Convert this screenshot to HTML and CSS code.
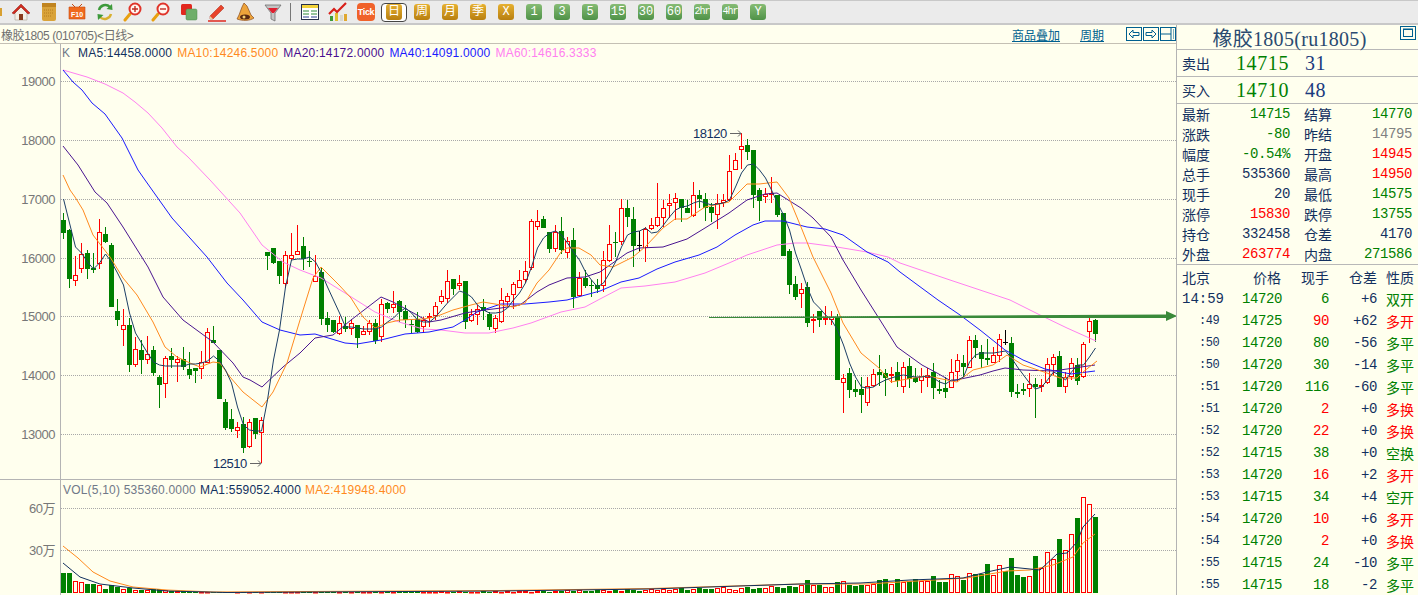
FILE: index.html
```html
<!DOCTYPE html>
<html lang="zh">
<head>
<meta charset="utf-8">
<title>橡胶1805</title>
<link rel="stylesheet" href="styles.css">
</head>
<body>
<div class="app">
  <div class="toolbar">
    <span class="stub"></span>
    <span class="slot"><svg class="ico" viewBox="0 0 20 20"><path d="M8 16V10h4v6z" fill="#7a2a10"/><path d="M4 10v8h12v-8L10 5z" fill="#f4efe6" stroke="#a8a090" stroke-width=".6"/><path d="M8 18v-6h4v6z" fill="#8a3a1a"/><path d="M1 11L10 2l9 9-2 1-7-7-7 7z" fill="#d02a1e" stroke="#8e1a10" stroke-width=".5"/></svg></span>
    <span class="slot"><svg class="ico" viewBox="0 0 20 20"><rect x="3" y="1" width="14" height="18" rx="2" fill="#d9a33a"/><rect x="3" y="1" width="14" height="4" fill="#c08420"/><path d="M5 8h10M5 11h10M5 14h7" stroke="#b57c20" stroke-dasharray="1 1"/></svg></span>
    <span class="slot"><svg class="ico" viewBox="0 0 20 20"><path d="M2 5h16v12H2z" fill="#ef6a1e" stroke="#c84a10" stroke-width=".6"/><path d="M5 2l3 3M15 2l-3 3" stroke="#c84a10"/><text class="f10" x="10" y="15">F10</text></svg></span>
    <span class="slot"><svg class="ico" viewBox="0 0 20 20"><path d="M4 8a6.500 6.500 0 0 1 11-3" fill="none" stroke="#3d9a3a" stroke-width="2.400"/><path d="M17 2l.5 6-6-1z" fill="#3d9a3a"/><path d="M16 12a6.500 6.500 0 0 1-11 3" fill="none" stroke="#d8b030" stroke-width="2.400"/><path d="M3 18l-.5-6 6 1z" fill="#3d9a3a"/></svg></span>
    <span class="slot"><svg class="ico" viewBox="0 0 20 20"><path d="M7 12l-5 6" stroke="#e8a010" stroke-width="3" stroke-linecap="round"/><circle cx="12" cy="7" r="5.500" fill="#fff6f0" stroke="#e0342a" stroke-width="2"/><path d="M9 7h6M12 4v6" stroke="#c02a20" stroke-width="1.400"/></svg></span>
    <span class="slot"><svg class="ico" viewBox="0 0 20 20"><path d="M7 12l-5 6" stroke="#e8a010" stroke-width="3" stroke-linecap="round"/><circle cx="12" cy="7" r="5.500" fill="#fff6f0" stroke="#e0342a" stroke-width="2"/><path d="M9 7h6" stroke="#c02a20" stroke-width="1.400"/></svg></span>
    <span class="slot"><svg class="ico" viewBox="0 0 20 20"><rect x="2" y="2" width="11" height="11" rx="1.500" fill="#e2281e"/><rect x="7" y="7" width="11" height="11" rx="1.500" fill="#6fae6a" stroke="#4e8a4c" stroke-width=".5"/></svg></span>
    <span class="slot"><svg class="ico" viewBox="0 0 20 20"><path d="M3 14L14 3l3 3L6 17H3z" fill="#e8432a" stroke="#a82a18" stroke-width=".5"/><path d="M3 14l3 3H3z" fill="#e8d0a0"/><path d="M1 19h18" stroke="#e0342a" stroke-width="1.600"/></svg></span>
    <span class="slot"><svg class="ico" viewBox="0 0 20 20"><path d="M9 1l3 3 4 9 3 3c-4 3-12 3-17 1l2-4 3-8z" fill="#eda33a" stroke="#8a4a1a" stroke-width=".7"/><ellipse cx="10" cy="15" rx="5" ry="2.500" fill="#5a2a12"/><circle cx="9" cy="15" r="1.500" fill="#f4d070"/></svg></span>
    <span class="slot"><svg class="ico" viewBox="0 0 20 20"><path d="M2 3h16l-6 8v8l-4-2v-6z" fill="#c4c4c4" stroke="#707070" stroke-width=".8"/><path d="M5 6h10l-4 5H9z" fill="#e02030"/></svg></span>
    <span class="sep"></span>
    <span class="slot"><svg class="ico" viewBox="0 0 20 20"><rect x="1.500" y="2.500" width="17" height="15" fill="#fff" stroke="#26304a"/><rect x="2" y="3" width="16" height="3" fill="#f2d23a"/><path d="M3 9h6M11 9h6M3 12h6M11 12h6" stroke="#2e8a3a" stroke-width="1.200"/><path d="M3 15h6M11 15h6" stroke="#2a3f90" stroke-width="1.200"/></svg></span>
    <span class="slot"><svg class="ico" viewBox="0 0 20 20"><rect x="2" y="14" width="3" height="5" fill="#3d9a3a"/><rect x="7" y="11" width="3" height="8" fill="#e0c030"/><rect x="12" y="13" width="3" height="6" fill="#d8d8d0"/><rect x="16" y="12" width="3" height="7" fill="#e0a830"/><path d="M1 12l5-5 3 3 9-9" fill="none" stroke="#d8201a" stroke-width="2.200"/></svg></span>
    <span class="slot"><span class="tick">Tick</span></span>
    <span class="slot"><span class="sel"><span class="btn gold">日</span></span></span>
    <span class="slot"><span class="btn gold">周</span></span>
    <span class="slot"><span class="btn gold">月</span></span>
    <span class="slot"><span class="btn gold">季</span></span>
    <span class="slot"><span class="btn gold">X</span></span>
    <span class="slot"><span class="btn green">1</span></span>
    <span class="slot"><span class="btn green">3</span></span>
    <span class="slot"><span class="btn green">5</span></span>
    <span class="slot"><span class="btn green">15</span></span>
    <span class="slot"><span class="btn green">30</span></span>
    <span class="slot"><span class="btn green">60</span></span>
    <span class="slot"><span class="btn green narrow">2hr</span></span>
    <span class="slot"><span class="btn green narrow">4hr</span></span>
    <span class="slot"><span class="btn green">Y</span></span>
  </div>

  <div class="main">
    <div class="left">
      <div class="head">
        <span class="head-title">橡胶1805 (010705)&lt;日线&gt;</span>
        <a class="head-link link-overlay">商品叠加</a>
        <a class="head-link link-period">周期</a>
        <span class="mini-icons">
          <svg class="mini" viewBox="0 0 16 14"><rect x=".5" y=".5" width="15" height="13" fill="none" stroke="#005f8f"/><path d="M3 7l4-4v2.500h6v3H7V11z" fill="none" stroke="#005f8f"/></svg>
          <svg class="mini" viewBox="0 0 16 14"><rect x=".5" y=".5" width="15" height="13" fill="none" stroke="#005f8f"/><path d="M13 7L9 3v2.500H3v3h6V11z" fill="none" stroke="#005f8f"/></svg>
          <svg class="mini" viewBox="0 0 16 14"><rect x=".5" y=".5" width="15" height="13" fill="none" stroke="#005f8f"/><path d="M1 7h10M11 1v12" stroke="#005f8f"/><path d="M13 3h1M13 5h1M13 7h1M13 9h1M13 11h1" stroke="#005f8f"/></svg>
        </span>
      </div>
      <div class="chart">
        <svg id="plot" class="plot" viewBox="0 44 1176 551" width="1176" height="551"></svg>
        <div class="legend legend-k">
          <span class="c-gray k">K</span>
          <span class="c-navy">MA5:14458.0000</span>
          <span class="c-orange">MA10:14246.5000</span>
          <span class="c-purple">MA20:14172.0000</span>
          <span class="c-blue">MA40:14091.0000</span>
          <span class="c-pink">MA60:14616.3333</span>
        </div>
        <div class="legend legend-v">
          <span class="c-gray">VOL(5,10) 535360.0000</span>
          <span class="c-navy">MA1:559052.4000</span>
          <span class="c-orange">MA2:419948.4000</span>
        </div>
      </div>
    </div>

    <div class="right">
      <div class="r-title">
        <span>橡胶1805(ru1805)</span>
        <svg class="mini r-max" viewBox="0 0 16 14"><rect x=".5" y=".5" width="15" height="13" fill="none" stroke="#005f8f"/><rect x="3.500" y="3" width="9" height="7.500" fill="none" stroke="#005f8f"/><path d="M3 3.500h10" stroke="#005f8f"/></svg>
      </div>
      <div class="quote">
        <span class="q-label">卖出</span><span class="q-price">14715</span><span class="q-vol">31</span>
      </div>
      <div class="quote">
        <span class="q-label">买入</span><span class="q-price">14710</span><span class="q-vol">48</span>
      </div>
      <div class="stats">
        <div class="cell"><span>最新</span><b class="g">14715</b></div><div class="cell"><span>结算</span><b class="g">14770</b></div>
        <div class="cell"><span>涨跌</span><b class="g">-80</b></div><div class="cell"><span>昨结</span><b class="h">14795</b></div>
        <div class="cell"><span>幅度</span><b class="g">-0.54%</b></div><div class="cell"><span>开盘</span><b class="r">14945</b></div>
        <div class="cell"><span>总手</span><b>535360</b></div><div class="cell"><span>最高</span><b class="r">14950</b></div>
        <div class="cell"><span>现手</span><b>20</b></div><div class="cell"><span>最低</span><b class="g">14575</b></div>
        <div class="cell"><span>涨停</span><b class="r">15830</b></div><div class="cell"><span>跌停</span><b class="g">13755</b></div>
        <div class="cell"><span>持仓</span><b>332458</b></div><div class="cell"><span>仓差</span><b>4170</b></div>
        <div class="cell"><span>外盘</span><b class="r">263774</b></div><div class="cell"><span>内盘</span><b class="g">271586</b></div>
      </div>
      <div class="ticks">
        <div class="tr th"><span>北京</span><span class="tc">价格</span><span class="ta">现手</span><span class="ta">仓差</span><span class="tt">性质</span></div>
        <div class="tr"><span class="t-first">14:59</span><span class="g">14720</span><span class="ta g">6</span><span class="ta">+6</span><span class="tt g">双开</span></div>
        <div class="tr"><span class="t-min">:49</span><span class="g">14725</span><span class="ta r">90</span><span class="ta">+62</span><span class="tt r">多开</span></div>
        <div class="tr"><span class="t-min">:50</span><span class="g">14720</span><span class="ta g">80</span><span class="ta">-56</span><span class="tt g">多平</span></div>
        <div class="tr"><span class="t-min">:50</span><span class="g">14720</span><span class="ta g">30</span><span class="ta">-14</span><span class="tt g">多平</span></div>
        <div class="tr"><span class="t-min">:51</span><span class="g">14720</span><span class="ta g">116</span><span class="ta">-60</span><span class="tt g">多平</span></div>
        <div class="tr"><span class="t-min">:51</span><span class="g">14720</span><span class="ta r">2</span><span class="ta">+0</span><span class="tt r">多换</span></div>
        <div class="tr"><span class="t-min">:52</span><span class="g">14720</span><span class="ta r">22</span><span class="ta">+0</span><span class="tt r">多换</span></div>
        <div class="tr"><span class="t-min">:52</span><span class="g">14715</span><span class="ta g">38</span><span class="ta">+0</span><span class="tt g">空换</span></div>
        <div class="tr"><span class="t-min">:53</span><span class="g">14720</span><span class="ta r">16</span><span class="ta">+2</span><span class="tt r">多开</span></div>
        <div class="tr"><span class="t-min">:53</span><span class="g">14715</span><span class="ta g">34</span><span class="ta">+4</span><span class="tt g">空开</span></div>
        <div class="tr"><span class="t-min">:54</span><span class="g">14720</span><span class="ta r">10</span><span class="ta">+6</span><span class="tt r">多开</span></div>
        <div class="tr"><span class="t-min">:54</span><span class="g">14720</span><span class="ta r">2</span><span class="ta">+0</span><span class="tt r">多换</span></div>
        <div class="tr"><span class="t-min">:55</span><span class="g">14715</span><span class="ta g">24</span><span class="ta">-10</span><span class="tt g">多平</span></div>
        <div class="tr"><span class="t-min">:55</span><span class="g">14715</span><span class="ta g">18</span><span class="ta">-2</span><span class="tt g">多平</span></div>
      </div>
    </div>
  </div>
</div>
<script src="chart.js"></script>
</body>
</html>
```
FILE: styles.css
```css
* { box-sizing: border-box; }
html, body { margin: 0; height: 100%; overflow: hidden; }
body {
  background: #ffffee;
  font-family: "Liberation Sans", "Noto Sans CJK SC", sans-serif;
  font-size: 12px;
  color: #12305f;
}
.app { display: flex; flex-direction: column; width: 1418px; height: 595px; }

/* toolbar */
.toolbar {
  height: 25px;
  flex: none;
  display: flex;
  align-items: center;
  padding-left: 0;
  background: #ebebeb;
  border-top: 1px solid #c8c8c8;
  border-bottom: 2px solid #c8c8c8;
}
.stub { width: 2px; height: 8px; margin-right: 5px; background: #d8a030; }
.slot { width: 28px; height: 22px; flex: none; display: flex; align-items: center; justify-content: center; }
.ico { width: 20px; height: 20px; display: block; }
.f10 { font: bold 7px "Liberation Sans", sans-serif; fill: #fff; text-anchor: middle; }
.sep { width: 1px; height: 18px; margin: 0 5px 0 3px; background: #777; }
.tick {
  width: 18px; height: 18px;
  border-radius: 4px;
  background: #f0622a;
  color: #fff;
  font: bold 9px/18px "Liberation Sans", sans-serif;
  text-align: center;
  letter-spacing: -.3px;
}
.btn {
  width: 16px; height: 16px;
  border-radius: 3px;
  display: block;
  color: #fff;
  font-size: 12px;
  line-height: 16px;
  text-align: center;
  font-family: "Liberation Mono", "Noto Sans CJK SC", monospace;
}
.btn.gold { background: linear-gradient(#e6b030, #b87f10); }
.btn.green { background: linear-gradient(#86bc74, #4f9248); }
.btn.narrow { font-size: 10px; letter-spacing: -1px; }
.sel {
  width: 26px; height: 19px;
  display: flex; align-items: center; justify-content: center;
  background: #fff;
  border: 1px solid #444;
  border-radius: 4px;
}

/* main */
.main { flex: 1; display: flex; min-height: 0; }
.left { width: 1176px; flex: none; display: flex; flex-direction: column; }
.head {
  height: 19px;
  flex: none;
  display: flex;
  align-items: center;
  border-bottom: 1px solid #c4c0b4;
}
.head-title { padding-left: 1px; color: #707070; width: 1012px; flex: none; letter-spacing: -.4px; }
.head-link { color: #005f8f; text-decoration: underline; flex: none; }
.link-overlay { width: 68px; }
.link-period { width: 46px; }
.mini-icons { display: flex; gap: 1px; flex: none; }
.mini { width: 16px; height: 14px; display: block; }

.chart { position: relative; flex: 1; min-height: 0; }
.plot { display: block; }
.legend { position: absolute; display: flex; white-space: nowrap; letter-spacing: .2px; line-height: 14px; }
.legend-k { top: 2px; left: 62px; gap: 5px; }
.legend-k .k { width: 11px; }
.legend-v { top: 439px; left: 63px; gap: 4px; }
.c-gray { color: #707888; }
.c-navy { color: #12305f; }
.c-orange { color: #ff8a1e; }
.c-purple { color: #4a0f90; }
.c-blue { color: #1a1aff; }
.c-pink { color: #ff80f0; }

.axis { font: 13px "Liberation Sans", "Noto Sans CJK SC", sans-serif; fill: #777; text-anchor: end; letter-spacing: -.5px; }
.peak { font: 13px "Liberation Sans", sans-serif; fill: #12305f; letter-spacing: -.5px; }

/* right panel */
.right { width: 242px; flex: none; border-left: 1px solid #b4b4b4; display: flex; flex-direction: column; }
.r-title {
  position: relative;
  height: 25px;
  flex: none;
  display: flex;
  align-items: center;
  justify-content: center;
  padding-right: 16px;
  border-bottom: 1px solid #b8b8b8;
  font: 20px "Liberation Serif", "Noto Sans CJK SC", serif;
  letter-spacing: .3px;
  color: #2a4a70;
}
.r-max { position: absolute; right: 2px; top: 1px; }
.quote {
  height: 27px;
  flex: none;
  display: flex;
  align-items: center;
  padding-left: 5px;
  border-bottom: 1px solid #b8b8b8;
}
.q-label { width: 54px; font-size: 14px; }
.q-price { width: 69px; font: 20px "Liberation Serif", serif; letter-spacing: .6px; color: #008000; }
.q-vol { font: 20px "Liberation Serif", serif; letter-spacing: .6px; color: #1a3a7e; }

.stats {
  height: 161px;
  flex: none;
  display: grid;
  grid-template-columns: 108px 108px;
  grid-auto-rows: 20px;
  column-gap: 14px;
  padding: 0 0 0 5px;
  border-bottom: 1px solid #b8b8b8;
}
.cell { display: flex; justify-content: space-between; align-items: center; font-size: 14px; }
.cell b {
  font: 14px "Liberation Mono", monospace;
  letter-spacing: -.4px;
  color: #12305f;
}
.cell b.g, .g { color: #008000; }
.cell b.r, .r { color: #ff0000; }
.cell b.h { color: #808080; }

.tr {
  height: 22px;
  display: grid;
  grid-template-columns: 60px 40px 47px 48px 36px;
  align-items: center;
  padding-left: 5px;
  font: 14px "Liberation Mono", "Noto Sans CJK SC", monospace;
  letter-spacing: -.4px;
}
.tr .ta { text-align: right; }
.tr .tt { padding-left: 9px; letter-spacing: 0; font-family: "Noto Sans CJK SC", sans-serif; white-space: nowrap; }
.tr.th { font-family: "Noto Sans CJK SC", sans-serif; letter-spacing: 0; height: 23px; }
.th .tc { padding-left: 11px; white-space: nowrap; }
.th .ta { white-space: nowrap; }
.t-first { letter-spacing: 0; }
.t-min { padding-left: 17px; font-size: 12px; }
```
FILE: chart.js
```js
// [high, bodyTop, bodyBottom, low, colour] in plot pixels, one row per trading day
var C = [
[213,220,233,239,'g'],[229,230,279,288,'g'],[256,275,281,286,'r'],[243,254,269,273,'r'],[250,253,269,279,'g'],
[253,268,270,273,'g'],[219,232,264,269,'r'],[227,234,242,243,'g'],[243,245,307,307,'g'],[299,311,320,326,'g'],
[309,325,330,346,'r'],[318,325,365,372,'g'],[337,349,365,367,'r'],[340,350,360,374,'g'],[336,354,360,364,'r'],
[346,350,373,376,'g'],[375,377,385,408,'g'],[356,358,384,398,'r'],[348,356,360,368,'g'],[356,359,363,382,'r'],
[347,359,367,370,'g'],[352,369,375,379,'g'],[368,368,371,383,'g'],[351,362,369,379,'r'],[328,332,363,363,'r'],
[326,340,343,343,'g'],[350,350,399,399,'g'],[399,402,428,430,'g'],[409,419,429,432,'g'],[422,427,431,438,'r'],
[417,424,448,453,'g'],[419,422,447,448,'r'],[418,418,434,439,'g'],[417,420,433,463,'r'],[252,252,256,270,'g'],
[248,248,263,264,'g'],[261,261,276,284,'g'],[251,255,284,288,'r'],[233,255,259,260,'r'],[225,251,255,255,'r'],
[237,246,259,270,'g'],[251,261,262,267,'g'],[255,276,282,282,'r'],[267,272,319,325,'g'],[312,318,325,332,'g'],
[320,320,332,333,'g'],[316,323,334,335,'r'],[317,326,329,332,'g'],[319,323,329,335,'r'],[325,325,338,348,'g'],
[326,331,335,335,'r'],[320,323,332,335,'r'],[319,323,341,344,'g'],[299,304,337,342,'r'],[302,303,309,313,'g'],
[291,304,308,313,'r'],[300,301,312,322,'g'],[305,311,320,328,'g'],[320,324,325,333,'g'],[312,319,332,333,'g'],
[317,320,327,333,'r'],[313,316,318,327,'r'],[302,306,316,320,'r'],[290,296,302,304,'r'],[270,281,299,303,'r'],
[279,279,289,295,'g'],[275,283,286,290,'r'],[281,281,322,329,'g'],[309,314,321,322,'r'],[305,309,315,325,'r'],
[299,307,311,320,'g'],[312,314,327,330,'g'],[315,318,329,333,'r'],[288,300,322,323,'r'],[293,296,302,307,'r'],
[282,284,295,309,'r'],[270,280,288,288,'r'],[261,271,280,283,'r'],[219,221,268,270,'r'],[210,221,227,230,'r'],
[216,219,228,228,'g'],[232,232,249,253,'g'],[225,232,249,252,'r'],[217,231,250,254,'g'],[237,241,253,258,'r'],
[228,240,297,308,'g'],[272,278,296,297,'r'],[270,278,286,288,'g'],[280,285,286,297,'g'],[279,285,289,293,'g'],
[251,260,286,292,'r'],[225,244,261,262,'r'],[232,242,243,257,'g'],[199,208,242,245,'r'],[200,208,217,227,'g'],
[207,219,246,267,'g'],[231,245,246,252,'k'],[227,229,248,262,'r'],[218,225,229,230,'r'],[183,217,226,227,'r'],
[200,208,218,227,'r'],[194,203,206,218,'r'],[193,198,203,220,'r'],[199,199,208,222,'g'],[200,208,213,213,'g'],
[182,195,216,217,'r'],[190,195,199,208,'g'],[193,199,208,221,'g'],[203,207,213,222,'g'],[194,203,215,229,'r'],
[194,200,203,207,'r'],[155,171,200,202,'r'],[153,160,170,170,'r'],[133,146,150,169,'r'],[139,145,152,160,'g'],
[150,150,195,208,'g'],[188,190,201,221,'g'],[188,194,197,203,'r'],[177,193,195,203,'r'],[195,195,215,217,'g'],
[213,213,256,256,'g'],[249,251,285,294,'g'],[276,284,297,300,'g'],[283,289,294,308,'r'],[282,287,323,327,'g'],
[314,319,320,333,'r'],[311,311,320,327,'g'],[306,318,319,325,'r'],[311,317,320,325,'r'],[314,317,380,380,'g'],
[374,378,383,413,'r'],[368,373,390,398,'g'],[380,389,392,397,'g'],[377,389,395,413,'g'],[377,386,403,406,'r'],
[369,374,386,387,'r'],[355,372,375,386,'g'],[369,373,378,396,'g'],[367,374,376,383,'r'],[362,372,381,387,'g'],
[362,367,387,393,'r'],[358,366,379,388,'g'],[368,378,382,383,'g'],[368,376,381,393,'r'],[368,375,378,387,'r'],
[363,372,388,399,'g'],[380,389,391,394,'g'],[377,388,392,398,'g'],[359,372,388,388,'r'],[354,360,372,382,'r'],
[355,363,367,377,'g'],[336,340,368,368,'r'],[335,340,348,358,'g'],[345,352,359,368,'g'],[339,358,360,365,'g'],
[347,355,363,363,'r'],[334,339,356,362,'r'],[330,342,343,345,'k'],[337,343,392,397,'g'],[384,392,394,398,'g'],
[383,389,391,395,'g'],[373,384,389,397,'r'],[378,384,387,418,'g'],[379,385,387,392,'r'],[358,364,383,384,'r'],
[354,357,365,375,'r'],[351,356,387,387,'g'],[372,377,387,393,'r'],[358,363,377,380,'r'],[358,365,381,385,'g'],
[342,344,377,378,'r'],[318,321,332,343,'r'],[319,320,334,342,'g']
];

var MA5 = [199,223,247,253,262,269,263,254,262,273,285,313,333,343,353,362,365,366,366,366,366,364,364,363,361,356,361,370,383,407,
425,430,431,431,400,360,330,287,260,259,259,257,262,273,287,300,313,327,327,328,329,329,329,327,322,318,312,308,313,320,
322,322,317,310,303,297,291,293,297,305,310,313,313,312,308,300,293,283,267,248,238,233,231,235,243,252,260,272,280,287,
283,273,262,247,235,232,231,228,233,232,225,217,210,207,206,203,201,203,205,204,203,200,187,173,165,164,170,178,190,203,
215,230,253,270,288,302,308,315,320,330,345,363,377,387,388,387,383,380,378,376,375,376,377,377,376,378,382,384,380,380,
377,362,355,353,353,353,352,351,358,367,375,383,389,387,380,372,375,380,372,365,365,357,348];

var MA10 = [[63,175],[70,190],[75,197],[83,210],[93,235],[110,257],[123,278],[137,295],[153,322],[165,347],[177,357],[190,363],[200,367],[213,362],[220,363],[230,377],[243,392],[262,407],[273,392],[287,363],[300,320],[313,278],[321,267],[339,285],[351,298],[363,317],[375,328],[387,323],[400,320],[423,319],[435,317],[453,310],[471,305],[483,302],[501,305],[513,307],[525,303],[537,283],[549,270],[561,252],[567,248],[579,248],[591,255],[600,265],[613,267],[633,257],[645,247],[663,228],[675,219],[687,219],[705,207],[729,202],[747,184],[759,184],[777,182],[789,198],[801,227],[813,257],[831,293],[843,323],[861,353],[879,368],[891,382],[913,378],[927,376],[947,380],[957,382],[973,370],[993,365],[1007,355],[1023,365],[1047,373],[1060,378],[1077,378],[1083,372],[1097,361]];

var MA20 = [[63,146],[78,165],[95,192],[107,203],[123,227],[133,243],[148,267],[163,297],[183,320],[213,342],[233,363],[243,377],[250,380],[262,387],[283,367],[300,353],[315,338],[333,335],[351,320],[381,297],[393,302],[417,315],[429,322],[441,320],[465,313],[477,311],[501,308],[520,305],[537,292],[549,285],[567,278],[585,277],[600,272],[627,253],[639,248],[663,247],[687,239],[705,228],[729,213],[747,200],[765,194],[777,193],[801,208],[813,218],[831,237],[843,260],[861,290],[880,320],[897,347],[922,365],[937,373],[951,381],[980,375],[993,371],[1005,368],[1023,370],[1053,371],[1095,365]];

var MA40 = [[63,70],[73,82],[82,90],[92,103],[105,114],[122,138],[138,170],[145,180],[172,218],[207,257],[227,283],[243,300],[262,322],[280,330],[300,335],[315,334],[345,343],[357,344],[381,340],[405,334],[429,332],[453,327],[465,320],[477,312],[501,304],[525,304],[549,302],[567,300],[600,291],[621,282],[639,278],[657,269],[675,262],[699,255],[717,247],[735,235],[753,225],[765,221],[783,221],[807,227],[825,229],[843,235],[867,252],[888,262],[900,272],[938,300],[960,315],[980,330],[1005,350],[1023,360],[1045,369],[1071,374],[1095,371]];

var MA60 = [[63,70],[87,77],[105,84],[123,93],[135,102],[148,113],[162,128],[177,147],[188,157],[210,180],[240,213],[262,245],[283,262],[300,270],[321,278],[345,293],[375,312],[399,322],[423,329],[441,330],[465,333],[489,333],[513,328],[531,323],[561,312],[585,307],[600,299],[621,288],[645,286],[675,282],[705,273],[729,263],[747,255],[777,245],[795,243],[807,243],[837,247],[867,252],[888,257],[900,263],[950,280],[1010,300],[1040,315],[1067,328],[1096,341]];

var V1 = [[63,563],[80,577],[100,584],[133,588],[167,591],[227,592.5],[500,591],[650,589],[800,584],[860,583],[910,580],[963,578],[987,572],[1010,567],[1040,570],[1057,554],[1067,553],[1077,542],[1083,527],[1095,514]];
var V2 = [[63,546],[78,558],[93,572],[110,581],[133,587],[167,590],[213,592],[500,590.5],[650,588.5],[800,584],[867,584],[917,581],[967,578],[1007,571],[1030,570],[1053,565],[1073,557],[1083,543],[1095,534]];

// bar heights in pixels above the volume baseline: days 0-17, 18-122, 123-172
var VOLH = [19.5,19.5,12,11,8.5,8.5,7.5,3.5,7.5,5.5,4,5,3,2.5,3,3.5,3.5,2.5].concat(
[2,2,2,1,1,1,1,1,1,1],
[1,1,1,1,1,1,1,1,1,1],
[1,1,1,1,1,1,1,1,1,1],
[1,1,1,1,1,1,1,1,1,1],
[1,2,1,1,1,2,1,1,2,1],
[1,1,2,1,2,1,2,1,2,2],
[1,2,2,1,2,2,3,2,3,2],
[2,3,3,2,3,2,4,3,2,3],
[4,3,4,3,4,5,3,4,5,4],
[4,5,6,4,3,5,6,4,5,5],
[7,6,5,7,6],
[8,12.5,8,7.5,6,5.5,10.5,12,7.5,6.5],
[7.5,8,9,12.5,13.5,9,13.5,11,12,13.5],
[12,12,16.5,10.5,10.5,19,17,12.5,20,18.5],
[18.5,28.5,17.5,28,22,34.5,17.5,15.5,17,36.5],
[25,41,34,53.5,43,59,74.5,96,89,75.5]);

var NS = 'http://www.w3.org/2000/svg';
var svg = document.getElementById('plot');
var COL = { g: '#008000', r: '#ff0000', k: '#000000' };

function add(tag, attrs, text) {
  var el = document.createElementNS(NS, tag);
  for (var k in attrs) el.setAttribute(k, attrs[k]);
  if (text !== undefined) el.textContent = text;
  svg.appendChild(el);
  return el;
}
function poly(pts, color, width) {
  add('polyline', {
    points: pts.map(function (p) { return p[0] + ',' + p[1]; }).join(' '),
    fill: 'none', stroke: color, 'stroke-width': width || 1
  });
}

// grid
[81.5, 140.5, 199.5, 258.5, 316.5, 375.5, 434.5, 508.5, 550.5].forEach(function (y) {
  add('line', { x1: 61, x2: 1176, y1: y, y2: y, stroke: '#a8a8a8', 'stroke-dasharray': '1 1' });
});
add('line', { x1: 60.5, x2: 60.5, y1: 44, y2: 595, stroke: '#b4b4b4' });
add('line', { x1: 0, x2: 1176, y1: 479.5, y2: 479.5, stroke: '#b4b4b4' });

// axis labels
[[19000, 85.5], [18000, 144.5], [17000, 203.5], [16000, 262.5], [15000, 320.5], [14000, 379.5], [13000, 438.5]].forEach(function (a) {
  add('text', { x: 55, y: a[1], 'class': 'axis' }, a[0]);
});
add('text', { x: 55, y: 513, 'class': 'axis' }, '60万');
add('text', { x: 55, y: 555, 'class': 'axis' }, '30万');

// candles and volume
C.forEach(function (c, i) {
  var x = 61 + 6 * i, mid = x + 2.5, col = COL[c[4]];
  add('line', { x1: mid, x2: mid, y1: c[0], y2: c[3], stroke: col });
  if (c[4] === 'r') {
    add('rect', { x: x + .5, y: c[1] + .5, width: 4, height: Math.max(c[2] - c[1] - 1, 1), fill: '#ffffee', stroke: col });
  } else {
    add('rect', { x: x, y: c[1], width: 5, height: Math.max(c[2] - c[1], 1), fill: col });
  }
  var h = VOLH[i], top = 593 - Math.round(h);
  if (c[4] === 'r') {
    add('rect', { x: x + .5, y: top + .5, width: 4, height: Math.max(592 - top, .5), fill: '#ffffee', stroke: col });
  } else {
    add('rect', { x: x, y: top, width: 5, height: 593 - top, fill: c[4] === 'k' ? COL.g : col });
  }
});

// moving averages
poly(MA60, '#ff80f0');
poly(MA40, '#1a1aff');
poly(MA20, '#4a1590');
poly(MA10, '#ff8a1e');
poly(MA5.map(function (y, i) { return [63.5 + 6 * i, y]; }), '#1c3f66');
poly(V2, '#ff8a1e');
poly(V1, '#12305f');

// extreme labels with arrows
add('text', { x: 693, y: 138, 'class': 'peak' }, '18120');
add('path', { d: 'M730 133.500h11m-3-3l3 3-3 3', fill: 'none', stroke: '#666' });
add('text', { x: 213, y: 468, 'class': 'peak' }, '12510');
add('path', { d: 'M250 463.500h11m-3-3l3 3-3 3', fill: 'none', stroke: '#666' });

// hand-drawn trend arrow
add('polygon', { points: '709,317 1166,314.500 1166,311 1177,316 1166,321 1166,318 709,318', fill: '#3a8a3a' });
```
